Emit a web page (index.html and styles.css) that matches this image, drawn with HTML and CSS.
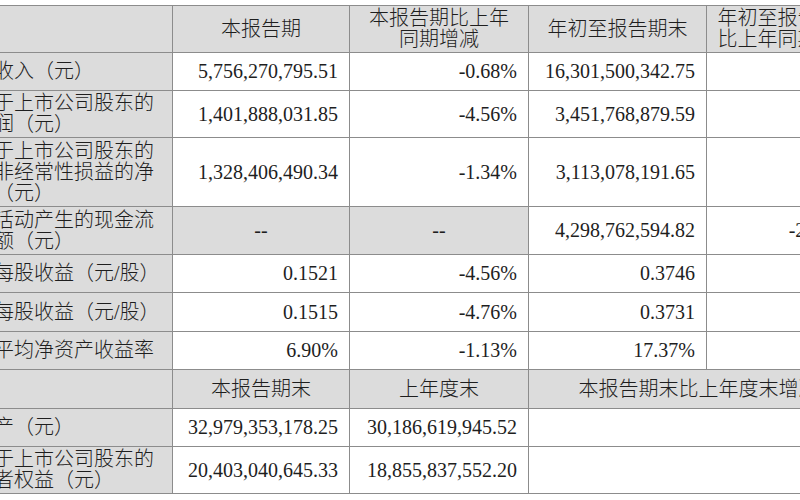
FILE: index.html
```html
<!DOCTYPE html>
<html lang="zh-CN">
<head>
<meta charset="utf-8">
<title>主要会计数据和财务指标</title>
<link rel="stylesheet" href="styles.css">
</head>
<body>
<table class="fin">
  <colgroup>
    <col class="c-label"><col class="c-num"><col class="c-num2"><col class="c-num3"><col class="c-num4">
  </colgroup>
  <tbody>
    <tr class="h45">
      <td class="gray"></td>
      <td class="gray ctr">本报告期</td>
      <td class="gray ctr">本报告期比上年同期增减</td>
      <td class="gray ctr">年初至报告期末</td>
      <td class="gray ctr">年初至报告期末比上年同期增减</td>
    </tr>
    <tr class="h38">
      <td class="gray lbl">营业收入（元）</td>
      <td class="num">5,756,270,795.51</td>
      <td class="num">-0.68%</td>
      <td class="num">16,301,500,342.75</td>
      <td class="num">3.32%</td>
    </tr>
    <tr class="h47">
      <td class="gray lbl">归属于上市公司股东的净利润（元）</td>
      <td class="num">1,401,888,031.85</td>
      <td class="num">-4.56%</td>
      <td class="num">3,451,768,879.59</td>
      <td class="num">5.41%</td>
    </tr>
    <tr class="h69">
      <td class="gray lbl">归属于上市公司股东的扣除非经常性损益的净利润（元）</td>
      <td class="num">1,328,406,490.34</td>
      <td class="num">-1.34%</td>
      <td class="num">3,113,078,191.65</td>
      <td class="num">4.92%</td>
    </tr>
    <tr class="h48">
      <td class="gray lbl">经营活动产生的现金流量净额（元）</td>
      <td class="gray ctr">--</td>
      <td class="gray ctr">--</td>
      <td class="num">4,298,762,594.82</td>
      <td class="num">-21.89%</td>
    </tr>
    <tr class="h38">
      <td class="gray lbl">基本每股收益（元/股）</td>
      <td class="num">0.1521</td>
      <td class="num">-4.56%</td>
      <td class="num">0.3746</td>
      <td class="num">5.42%</td>
    </tr>
    <tr class="h39">
      <td class="gray lbl">稀释每股收益（元/股）</td>
      <td class="num">0.1515</td>
      <td class="num">-4.76%</td>
      <td class="num">0.3731</td>
      <td class="num">5.21%</td>
    </tr>
    <tr class="h38">
      <td class="gray lbl">加权平均净资产收益率</td>
      <td class="num">6.90%</td>
      <td class="num">-1.13%</td>
      <td class="num">17.37%</td>
      <td class="num">0.09%</td>
    </tr>
    <tr class="h39">
      <td class="gray"></td>
      <td class="gray ctr">本报告期末</td>
      <td class="gray ctr">上年度末</td>
      <td class="gray ctr" colspan="2">本报告期末比上年度末增减</td>
    </tr>
    <tr class="h38">
      <td class="gray lbl">总资产（元）</td>
      <td class="num">32,979,353,178.25</td>
      <td class="num">30,186,619,945.52</td>
      <td class="num" colspan="2">9.25%</td>
    </tr>
    <tr class="h47">
      <td class="gray lbl">归属于上市公司股东的所有者权益（元）</td>
      <td class="num">20,403,040,645.33</td>
      <td class="num">18,855,837,552.20</td>
      <td class="num" colspan="2">8.21%</td>
    </tr>
  </tbody>
</table>
</body>
</html>
```
FILE: styles.css
```css
html, body {
  margin: 0;
  padding: 0;
  background: #ffffff;
}

body {
  padding-top: 5px;
  overflow: hidden;
}

.fin {
  margin-left: -53px;
  border-collapse: collapse;
  table-layout: fixed;
  width: 921px;
  font-family: "Liberation Serif", "Noto Sans CJK SC", serif;
  font-size: 20px;
  font-weight: 300;
  line-height: 21px;
  color: #1e1e1e;
}

.c-label { width: 225px; }
.c-num { width: 177px; }
.c-num2 { width: 179px; }
.c-num3 { width: 178px; }
.c-num4 { width: 162px; }

.fin td {
  border: 1px solid #8c8c8c;
  padding: 2px 11px;
  vertical-align: middle;
  overflow: hidden;
}

.fin td.lbl {
  padding-left: 6px;
  padding-right: 14px;
  text-align: left;
}

.fin td.ctr {
  padding-left: 10px;
  padding-right: 10px;
}

.gray { background: #dcdcdc; }
.ctr { text-align: center; }
.num { text-align: right; }

.h38 { height: 38px; }
.h39 { height: 39px; }
.h45 { height: 45px; }
.h47 { height: 47px; }
.h48 { height: 48px; }
.h69 { height: 69px; }
```
